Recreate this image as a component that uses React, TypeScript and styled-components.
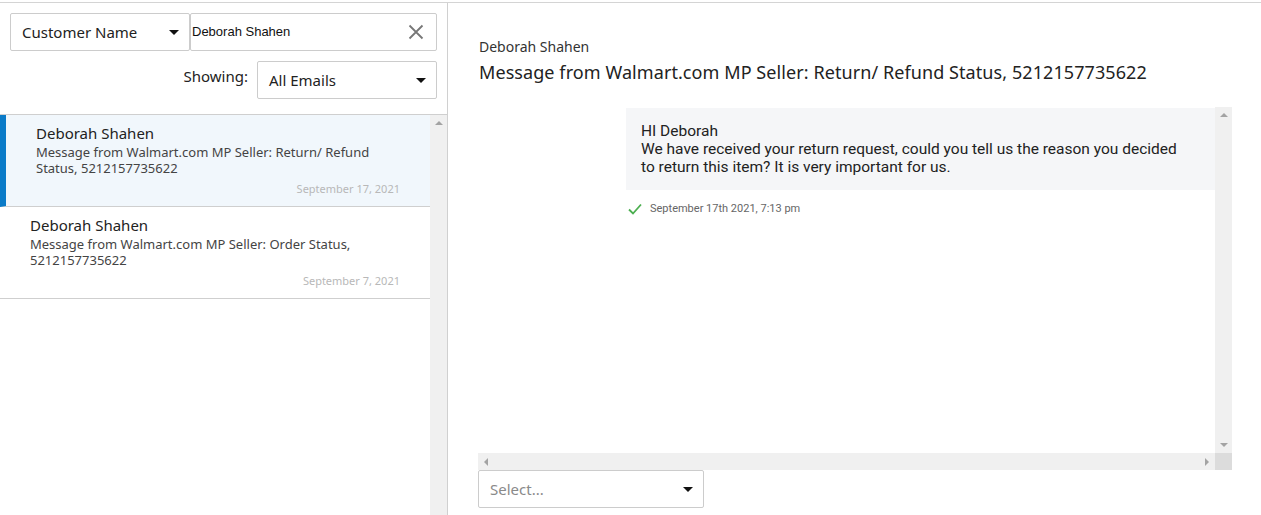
import React from "react";
import styled, { createGlobalStyle } from "styled-components";

const Global = createGlobalStyle`
  html, body { margin: 0; padding: 0; background: #fff; }
  body { font-family: "Noto Sans", "Open Sans", sans-serif; color: #222; }
  * { box-sizing: border-box; }
`;

const Page = styled.div`
  margin-top: 2px;
  border-top: 1px solid #d4d4d4;
  height: 513px;
  display: flex;
  overflow: hidden;
`;

const Sidebar = styled.div`
  width: 448px;
  flex: none;
  border-right: 1px solid #d0d0d0;
  display: flex;
  flex-direction: column;
`;

const Filters = styled.div`
  padding: 10px 10px 15px 10px;
  display: flex;
  flex-direction: column;
  gap: 10px;
  border-bottom: 1px solid #cfcfcf;
`;

const FilterRow = styled.div`
  display: flex;
  align-items: flex-start;
  justify-content: flex-end;
`;

const Select = styled.div<{ $w: number; $muted?: boolean }>`
  width: ${(p) => p.$w}px;
  height: 38px;
  border: 1px solid #cccccc;
  border-radius: 2px;
  display: flex;
  align-items: center;
  justify-content: space-between;
  padding: 0 8px 1px 11px;
  font-size: 15px;
  color: ${(p) => (p.$muted ? "#8a8a8a" : "#222")};
  background: #fff;
  flex: none;
`;

const Caret = styled.span`
  width: 0;
  height: 0;
  border-left: 5px solid transparent;
  border-right: 5px solid transparent;
  border-top: 5px solid #111;
  margin-right: 2px;
  margin-top: 1px;
`;

const SearchBox = styled.div`
  flex: 1;
  height: 38px;
  border: 1px solid #cccccc;
  border-radius: 2px;
  display: flex;
  align-items: center;
  justify-content: space-between;
  padding: 0 12px 1px 1px;
  font-family: "Liberation Sans", Arial, sans-serif;
  font-size: 13px;
  color: #111;
`;

const ShowLabel = styled.span`
  font-size: 15px;
  color: #222;
  margin-right: 9px;
  margin-top: 5px;
`;

const ListArea = styled.div`
  flex: 1;
  display: flex;
  min-height: 0;
`;

const List = styled.div`
  flex: 1;
  display: flex;
  flex-direction: column;
`;

const Item = styled.div<{ $active?: boolean }>`
  height: 92px;
  border-bottom: 1px solid #cfcfcf;
  background: ${(p) => (p.$active ? "#f1f7fc" : "#fff")};
  border-left: ${(p) => (p.$active ? "6px solid #0a7bc8" : "0")};
  padding: 8px 30px 0 30px;
  display: flex;
  flex-direction: column;
`;

const ItemName = styled.div`
  font-size: 15px;
  color: #222;
  line-height: 20px;
`;

const ItemDesc = styled.div`
  font-size: 13px;
  color: #444;
  line-height: 16px;
  margin-top: 1px;
`;

const ItemDate = styled.div`
  font-size: 11px;
  color: #b8b8b8;
  text-align: right;
  margin-top: 5px;
`;

const VScroll = styled.div`
  width: 17px;
  flex: none;
  background: #f0f0f0;
  display: flex;
  flex-direction: column;
  justify-content: space-between;
  align-items: center;
  padding: 6px 0;
`;

const ArrowUp = styled.span`
  width: 0;
  height: 0;
  border-left: 4px solid transparent;
  border-right: 4px solid transparent;
  border-bottom: 4px solid #a3a3a3;
`;
const ArrowDown = styled.span`
  width: 0;
  height: 0;
  border-left: 4px solid transparent;
  border-right: 4px solid transparent;
  border-top: 4px solid #a3a3a3;
`;
const ArrowLeft = styled.span`
  width: 0;
  height: 0;
  border-top: 4px solid transparent;
  border-bottom: 4px solid transparent;
  border-right: 4px solid #a3a3a3;
`;
const ArrowRight = styled.span`
  width: 0;
  height: 0;
  border-top: 4px solid transparent;
  border-bottom: 4px solid transparent;
  border-left: 4px solid #a3a3a3;
`;

const Main = styled.div`
  flex: 1;
  padding: 34px 29px 0 30px;
  display: flex;
  flex-direction: column;
`;

const Sender = styled.div`
  font-size: 14px;
  color: #333;
  line-height: 20px;
  margin-left: 1px;
`;

const Subject = styled.div`
  font-size: 18px;
  color: #222;
  line-height: 26px;
  margin-top: 2px;
  margin-left: 1px;
  letter-spacing: 0.08px;
`;

const Thread = styled.div`
  margin-top: 22px;
  height: 363px;
  display: grid;
  grid-template-columns: 1fr 17px;
  grid-template-rows: 1fr 17px;
`;

const ThreadBody = styled.div`
  display: flex;
  flex-direction: column;
  align-items: flex-end;
  padding-top: 1px;
`;

const Bubble = styled.div`
  width: 589px;
  background: #f5f6f8;
  padding: 14px 28px 14px 15px;
  font-family: "Roboto", sans-serif;
  font-size: 15.5px;
  line-height: 18px;
  color: #222;
`;

const Stamp = styled.div`
  width: 589px;
  display: flex;
  align-items: center;
  gap: 8px;
  padding-left: 2px;
  margin-top: 12px;
  font-family: "Roboto", sans-serif;
  font-size: 11px;
  color: #666;
`;

const HScroll = styled.div`
  background: #f0f0f0;
  display: flex;
  align-items: center;
  justify-content: space-between;
  padding: 0 6px;
`;

const Corner = styled.div`
  background: #dcdcdc;
`;

const Footer = styled.div`
  padding-top: 0;
`;

export default function App() {
  return (
    <>
      <Global />
      <Page>
        <Sidebar>
          <Filters>
            <FilterRow>
              <Select $w={180}>
                Customer Name
                <Caret />
              </Select>
              <SearchBox>
                Deborah Shahen
                <svg width="16" height="16" viewBox="0 0 16 16">
                  <path d="M1.5 1.5 L14.5 14.5 M14.5 1.5 L1.5 14.5" stroke="#777" strokeWidth="1.8" />
                </svg>
              </SearchBox>
            </FilterRow>
            <FilterRow>
              <ShowLabel>Showing:</ShowLabel>
              <Select $w={180}>
                All Emails
                <Caret />
              </Select>
            </FilterRow>
          </Filters>
          <ListArea>
            <List>
              <Item $active>
                <ItemName>Deborah Shahen</ItemName>
                <ItemDesc>Message from Walmart.com MP Seller: Return/ Refund Status, 5212157735622</ItemDesc>
                <ItemDate>September 17, 2021</ItemDate>
              </Item>
              <Item>
                <ItemName>Deborah Shahen</ItemName>
                <ItemDesc>Message from Walmart.com MP Seller: Order Status, 5212157735622</ItemDesc>
                <ItemDate>September 7, 2021</ItemDate>
              </Item>
            </List>
            <VScroll>
              <ArrowUp />
            </VScroll>
          </ListArea>
        </Sidebar>
        <Main>
          <Sender>Deborah Shahen</Sender>
          <Subject>Message from Walmart.com MP Seller: Return/ Refund Status, 5212157735622</Subject>
          <Thread>
            <ThreadBody>
              <Bubble>
                HI Deborah
                <br />
                We have received your return request, could you tell us the reason you decided to return this item? It is very important for us.
              </Bubble>
              <Stamp>
                <svg width="14" height="12" viewBox="0 0 14 12">
                  <path d="M1 6.5 L5 10.5 L13 1.5" fill="none" stroke="#4caf50" strokeWidth="1.8" />
                </svg>
                September 17th 2021, 7:13 pm
              </Stamp>
            </ThreadBody>
            <VScroll>
              <ArrowUp />
              <ArrowDown />
            </VScroll>
            <HScroll>
              <ArrowLeft />
              <ArrowRight />
            </HScroll>
            <Corner />
          </Thread>
          <Footer>
            <Select $w={226} $muted>
              Select...
              <Caret />
            </Select>
          </Footer>
        </Main>
      </Page>
    </>
  );
}
